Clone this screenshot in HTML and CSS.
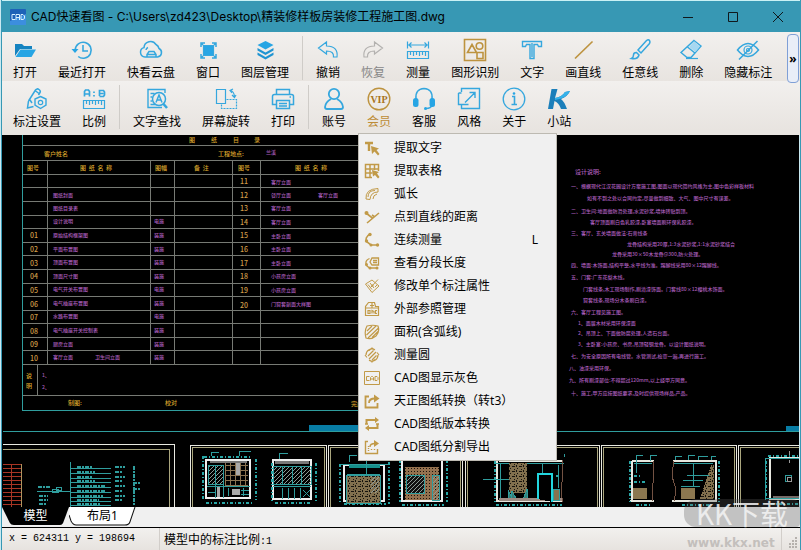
FILE: index.html
```html
<!DOCTYPE html>
<html lang="zh-CN">
<head>
<meta charset="utf-8">
<title>CAD快速看图</title>
<link rel="stylesheet" href="styles.css">
</head>
<body>
<div class="window">
  <header class="titlebar">
    <svg class="app-icon" viewBox="0 0 16 16" aria-hidden="true"><rect width="16" height="16" rx="1" fill="#1d62b8"/><path d="M0 12 16 5v11H0z" fill="#3c8ede"/><path d="M5 5.500H2v5h3M6 11V5.500h3.500V11M6 8.500h3.500M11 5.500h2l1.500 1.500v2.500L13 10.500h-2z" fill="none" stroke="#d7f0ff"/></svg>
    <h1 class="title">CAD快速看图 - C:\Users\zd423\Desktop\精装修样板房装修工程施工图.dwg</h1>
    <div class="controls">
      <button type="button" aria-label="最小化"><svg viewBox="0 0 12 12"><path d="M1 6.500h10"/></svg></button>
      <button type="button" aria-label="最大化"><svg viewBox="0 0 12 12"><path d="M1.500 1.500h9v9h-9z"/></svg></button>
      <button type="button" aria-label="关闭"><svg viewBox="0 0 12 12"><path d="M1 1l10 10M11 1 1 11"/></svg></button>
    </div>
  </header>

  <div class="toolbar">
    <div class="row">
      <div class="tools">
      <button type="button" class="tool"><svg viewBox="0 0 24 24"><path d="M2 18V6h7l2 2h8v3H7z" fill="#1583c0" stroke="none"/><path d="M7.500 11.500H23L18.500 19H2.500z" fill="#27a5e4" stroke="none"/></svg><span>打开</span></button>
      <button type="button" class="tool"><svg viewBox="0 0 24 24"><path d="M5.200 12a8 8 0 1 1 3 6.500M13 7v6h5" stroke-width="1.600"/><path d="M1.500 11h7L5 15z" fill="#27a5e4" stroke="none"/></svg><span>最近打开</span></button>
      <button type="button" class="tool"><svg viewBox="0 0 24 24"><path d="M7.500 19H6a4.800 4.800 0 0 1-1-9.400A6.500 6.500 0 0 1 17 6.500a6 6 0 0 1 3 4A4.500 4.500 0 0 1 18.500 19H17M8 19v-2.500l2-3h5l2 3V19zM8 16.500h9M7 12a3 3 0 0 1 2-2.500" stroke-width="1.500"/></svg><span>快看云盘</span></button>
      <button type="button" class="tool"><svg viewBox="0 0 24 24"><path d="M7.500 7.500h10v10h-10z" fill="#27a5e4"/><path d="M5 9V5h4M16 5h4v4M20 16v4h-4M9 20H5v-4M5 5l2 2M20 5l-2 2M5 20l2-2M20 20l-2-2" stroke-width="1.500"/></svg><span>窗口</span></button>
      <button type="button" class="tool"><svg viewBox="0 0 24 24"><path d="m12.500 3 8 4-8 4.500-8-4.500z" fill="#27a5e4" stroke="none"/><path d="m4.500 10 8 4.500 8-4.500v2.500l-8 4.500-8-4.500zM4.500 14.500l8 4.500 8-4.500V17l-8 4.500-8-4.500z" fill="#1f94d2" stroke="none"/></svg><span>图层管理</span></button>
      <i class="sep"></i>
      <button type="button" class="tool"><svg viewBox="0 0 24 24"><path d="m2.500 10 8-6v4c8 0 11.500 4 10.500 11h-3.500c.5-4-2-6-7-6v3z"/></svg><span>撤销</span></button>
      <button type="button" class="tool disabled" disabled><svg viewBox="0 0 24 24"><path d="m21.500 10-8-6v4C5.500 8 2 12 3 19h3.500c-.5-4 2-6 7-6v3z"/></svg><span>恢复</span></button>
      <button type="button" class="tool"><svg viewBox="0 0 24 24"><path d="M1.500 3.500v7M22.500 3.500v7M2 7h20M5.500 4.500 3 7l2.500 2.500M18.500 4.500 21 7l-2.500 2.500M1.500 13.500h21v7h-21zM4.500 14v3M7.500 14v4M10.500 14v3M13.500 14v4M16.500 14v3M19.500 14v4"/></svg><span>测量</span></button>
      <button type="button" class="tool gold-icon"><svg viewBox="0 0 24 24"><path d="M1.500 1.500h21v21h-21zM4.500 14.500l4.500-8 4.500 8zM14 14.500h6v6h-6z" stroke-width="1.600"/><circle cx="16.500" cy="8" r="3.300" stroke-width="1.600"/></svg><span>图形识别</span></button>
      <button type="button" class="tool"><svg viewBox="0 0 24 24"><path d="M2.500 3.500h19v5h-3l-1-2h-3.500v14h-4v-14H6.500l-1 2h-3zM12 5v14" stroke-width="1.400"/></svg><span>文字</span></button>
      <button type="button" class="tool gold-icon"><svg viewBox="0 0 24 24"><path d="M4 20.500 21.500 3.500" stroke-width="1.700"/></svg><span>画直线</span></button>
      <button type="button" class="tool"><svg viewBox="0 0 24 24"><path d="M10 12 18.500 2.500q2-1.500 3 0t0 3L13 15zM8.500 14.500l2.500 2.500q-1 4.500-7.500 3.500 2-1 2-3.500t3-2.500z" stroke-width="1.500"/></svg><span>任意线</span></button>
      <button type="button" class="tool"><svg viewBox="0 0 24 24"><path d="M15 2.500 22 8 12 19.500H8L2 14.500zM8.500 9l8 6.500" stroke-width="1.400"/><path d="m15 3.500 6 5-4.500 5.500-6.500-5z" fill="#a6d8f1" stroke="none"/><path d="M7 20.500h12"/></svg><span>删除</span></button>
      <button type="button" class="tool"><svg viewBox="0 0 24 24"><path d="M1.500 12q10.500-13 21 0-10.500 13-21 0zM21.500 3 3 21.500" stroke-width="1.500"/><circle cx="12" cy="12" r="4"/><circle cx="12" cy="12" r="1.500"/></svg><span>隐藏标注</span></button>
      </div>
      <button type="button" class="more" aria-label="更多工具">»</button>
    </div>
    <div class="row">
      <div class="tools">
      <button type="button" class="tool"><svg viewBox="0 0 24 24"><path d="m3.500 14 7-11q1.500-2 3.500-.500t1 3L13.500 8M3.500 14l-1 7 6-1.500M5 13l2 3M10 3.500l4 3" stroke-width="1.500"/><path d="M15.500 9.500 21 12v6l-5.500 3.500-5.500-3.500v-6z" stroke-width="1.400"/><circle cx="15.500" cy="15.500" r="2.200"/></svg><span>标注设置</span></button>
      <button type="button" class="tool"><svg viewBox="0 0 24 24"><path d="M2.500 9.500v-5l1-1.500h3l1 1.500v5M2.500 7h5M17.500 9V3.500h4L22.500 5v3l-1 1.500h-4M17.500 6.500h4M12 4.500v1.500M12 8v1.500" stroke-width="1.700"/><path d="M1.500 13.500h21v8h-21zM4.500 14v3M7.500 14v4M10.500 14v3M13.500 14v4M16.500 14v3M19.500 14v4"/></svg><span>比例</span></button>
      <i class="sep"></i>
      <button type="button" class="tool"><svg viewBox="0 0 24 24"><path d="M17 20.500H3v-18h17V6M5.500 6.500h4M5.500 10h1.500M5.500 14h1.500M5.500 17.500h5" stroke-width="1.400"/><circle cx="14" cy="12" r="6.500" stroke-width="1.500"/><path d="m18.500 17 3.500 4" stroke-width="2.500"/><path d="m11 15.500 3-7.500 3 7.500M12.200 13h3.600" stroke-width="1.500"/></svg><span>文字查找</span></button>
      <button type="button" class="tool"><svg viewBox="0 0 24 24"><path d="M2.500 2.500h9v14h-9zM16 3.500q4 .5 4.500 6M19 2l-3 1.500L18 6M18 8l2.500 2.500L22 8"/><path d="M12.500 12.500h10v9h-15V17" stroke-dasharray="2 1"/></svg><span>屏幕旋转</span></button>
      <button type="button" class="tool"><svg viewBox="0 0 24 24"><path d="M5.500 7.500v-5h13v5M5.500 17.500h-4v-8q0-2 2-2h17q2 0 2 2v8h-4M5.500 13.500h13v8h-13zM8 16.500h8M8 19h8M18.500 10h1.500" stroke-width="1.500"/></svg><span>打印</span></button>
      <i class="sep"></i>
      <button type="button" class="tool"><svg viewBox="0 0 24 24"><circle cx="12" cy="7" r="5.200" stroke-width="1.800"/><path d="M9 12q-5.500 3-6 8 0 2 2 2h14q2 0 2-2-.5-5-6-8" stroke-width="1.800"/></svg><span>账号</span></button>
      <div class="menu-anchor">
        <button type="button" class="tool gold-icon gold-label" aria-haspopup="menu" aria-expanded="true"><svg viewBox="0 0 24 24"><circle cx="12" cy="12" r="10.800" stroke-width="1.400"/><text x="12" y="15.500" class="vip">VIP</text></svg><span>会员</span></button>
        <div class="menu" role="menu">
          <button type="button" role="menuitem"><svg viewBox="0 0 16 16"><path d="M1 3h8M5 3v8" stroke-width="2.400"/><path d="m7 6 8 2.500-2.500 1.500 3 4-1.500 1.500-3.500-4L8 14z" class="fill"/></svg><span>提取文字</span></button>
          <button type="button" role="menuitem"><svg viewBox="0 0 16 16"><path d="M8 14.500H1.500v-13h13V8M1.500 6h13M1.500 10h7M6 1.500v13M10.500 1.500V7" stroke-width="1.500"/><path d="m8 7 7 2-2 1.500 2.500 3.500-1.500 1.500-3-3.500L9 13.500z" class="fill"/></svg><span>提取表格</span></button>
          <button type="button" role="menuitem"><svg viewBox="0 0 16 16"><path d="M2 13Q1 3 14 2.500V6Q6.500 6 6 13.500zM4 11Q4 4.500 11 4.500M9 13q0-4 4-5"/></svg><span>弧长</span></button>
          <button type="button" role="menuitem"><svg viewBox="0 0 16 16"><path d="M3 14 15 4M2 4l7 5.500M8 6l3 2" stroke-width="1.600"/><circle cx="2.500" cy="4" r="2" class="fill"/></svg><span>点到直线的距离</span></button>
          <button type="button" role="menuitem"><svg viewBox="0 0 16 16"><path d="M6 2q-6 4-3 8l4 3h7" stroke-width="1.600"/><circle cx="6" cy="2.500" r="1.700" class="fill"/><circle cx="2.500" cy="9" r="1.700" class="fill"/><circle cx="7" cy="13" r="1.500" class="fill"/><circle cx="13.500" cy="13" r="1.700" class="fill"/></svg><span>连续测量</span><kbd>L</kbd></button>
          <button type="button" role="menuitem"><svg viewBox="0 0 16 16"><path d="M5.500 3.500q-5 2-3 7l3 2.500h7M6 7l2-4h6.500v7H8zM9 5.500h4M9 7.500h4" stroke-width="1.300"/><circle cx="2.500" cy="9.500" r="1.500" class="fill"/><circle cx="6" cy="13" r="1.500" class="fill"/><circle cx="13" cy="13" r="1.500" class="fill"/></svg><span>查看分段长度</span></button>
          <button type="button" role="menuitem"><svg viewBox="0 0 16 16"><path d="m1.500 6 6.500-4 7 6-7 6.500zM4 6.500l4 5M6 5l4 5M7 9l7-7.500M11 9l2-2"/><path d="m7 9 1-3 2 2z" class="fill"/></svg><span>修改单个标注属性</span></button>
          <button type="button" role="menuitem"><svg viewBox="0 0 16 16"><path d="M1.500 14.500v-9l3-4h6l1 4h3v9zM1.500 7h13M6 4.500h4M8 2v5M4 9.500v3h2v-3zM8 12.500v-3l2 1v2M13 9.500h-1.500v3H13" stroke-width="1.200"/></svg><span>外部参照管理</span></button>
          <button type="button" role="menuitem"><svg viewBox="0 0 16 16"><path d="M3 2q6-1.500 11 0 2 6-2 10-5 4-10 2Q0 7 3 2zM3 7l5-5M2.500 11 12 2M4 14 14.500 4M8 13.500l6-6" stroke-width="1.200"/></svg><span>面积(含弧线)</span></button>
          <button type="button" role="menuitem"><svg viewBox="0 0 16 16"><path d="M2 8a6 6 0 0 1 9-5.200M14 8a6 6 0 0 1-9 5.200M1 8l2 2.500M15 8l-2-2.500M4 9l5.500-5.500M5 12l7-7M8 13l4.500-4.500M5 3.500 8 1l2.500 2M5.500 13 8 15l3-2.500" stroke-width="1.200"/></svg><span>测量圆</span></button>
          <button type="button" role="menuitem"><svg viewBox="0 0 16 16"><path d="M.5 1.500h15v13H.5zM5.500 6.500h-3v4h3M6.500 10.500v-3l1-1h1l1 1v3M6.500 9h3M11 6.500h2l1 1v2l-1 1h-2z"/></svg><span>CAD图显示灰色</span></button>
          <button type="button" role="menuitem"><svg viewBox="0 0 16 16"><path d="M5 3.500H1.500v11h12V10M5 10q0-4.500 6-4.500" stroke-width="1.800"/><path d="M10 1.500 15.500 5.500 10 9.500z" class="fill"/></svg><span>天正图纸转换（转t3）</span></button>
          <button type="button" role="menuitem"><svg viewBox="0 0 16 16"><path d="M2.500 8V4H12M13.500 8v4H4" stroke-width="2"/><path d="M11 1l4 3-4 3zM5 9l-4 3 4 3z" class="fill"/><path d="M1 8h3M12 8h3" stroke-width="1.500"/></svg><span>CAD图纸版本转换</span></button>
          <button type="button" role="menuitem"><svg viewBox="0 0 16 16"><path d="M4 2.500H1.500v12h12V10M6 8q0-3.500 5-3.500" stroke-width="1.400"/><path d="M10 1l5 3.500L10 8z" class="fill"/><path d="M4.500 7v5M7.500 10v2M10.500 10v2" stroke-dasharray="1 1" stroke-width="1.400"/></svg><span>CAD图纸分割导出</span></button>
        </div>
      </div>
      <button type="button" class="tool"><svg viewBox="0 0 24 24"><path d="M4 12q-1-10 8-10.500Q21 2 20 12M20 18q-1 3.500-6 3.500" stroke-width="1.500"/><rect x="1" y="11" width="5.500" height="9" rx="2.500" fill="#27a5e4" stroke="none"/><rect x="17.500" y="11" width="5.500" height="9" rx="2.500" fill="#27a5e4" stroke="none"/><circle cx="13.500" cy="21.500" r="1.500" fill="#27a5e4" stroke="none"/></svg><span>客服</span></button>
      <button type="button" class="tool"><svg viewBox="0 0 24 24"><path d="M12 1.500h10.500v20H4.500V18M12 1.500H4.500V5M1.500 6v11.500h10M1.500 6h3M8 15.500l10-10M18 11V5.500h-5.500" stroke-width="1.400"/></svg><span>风格</span></button>
      <button type="button" class="tool"><svg viewBox="0 0 24 24"><circle cx="12" cy="12" r="10.800" stroke-width="1.300"/><path d="M10 9.500h2.500v7.500M9.500 17.500h5.500" stroke-width="1.600"/><circle cx="12" cy="6.500" r="1.300" fill="#27a5e4" stroke="none"/></svg><span>关于</span></button>
      <button type="button" class="tool"><svg viewBox="0 0 24 24"><path d="M4.500 2h6L8 11q7-1 10-6l5-1q-2 5-9 8 3 2 6 10h-6q-2-6-6.500-8L6 22H1z" fill="#1c7fba" stroke="none"/><path d="M8 11q7-1 10-6l5-1q-3 7-15 9z" fill="#35b2ea" stroke="none"/></svg><span>小站</span></button>
      </div>
    </div>
  </div>

  <main class="canvas">
    <svg viewBox="2 135 798 372" preserveAspectRatio="xMinYMin slice" role="img" aria-label="图纸">
      <defs>
        <pattern id="hatch" width="4" height="4" patternUnits="userSpaceOnUse"><path d="M0 4 4 0" stroke="#8d9a95" fill="none"/></pattern>
        <pattern id="grid" width="5" height="5" patternUnits="userSpaceOnUse"><path d="M0 .5h5M.5 0v5" stroke="#8a7250" fill="none"/></pattern>
        <pattern id="stone" width="7" height="5" patternUnits="userSpaceOnUse"><rect width="7" height="5" fill="#82704e"/><path d="M1 1h2v1M5 0v2M3 4h1M6 3h1" stroke="#17140e" fill="none"/></pattern>
        <pattern id="dots" width="3" height="3" patternUnits="userSpaceOnUse"><rect width="3" height="3" fill="#94714f"/><rect width="1" height="1" fill="#1a130b"/></pattern>
      </defs>

      <!-- drawing index -->
      <g class="rule">
        <path d="M22 145.500H560M22 160.500H560M22 174.500H560M22 187.500H560M22 201.500H560M22 215.500H560M22 228.500H560M22 242.500H560M22 255.500H560M22 269.500H560M22 283.500H560M22 296.500H560M22 310.500H560M22 323.500H560M22 337.500H560M22 350.500H560M22 364.500H560M22 395.500H560" class="until-menu"/>
        <path d="M47.500 160v204M150.500 160v204M174.500 160v204M232.500 160v204M260.500 160v204M37.500 364v31"/>
      </g>
      <path class="cyan" d="M22.500 135v275.500H400M3 431.500H799"/>
      <path fill="#087da5" d="M309 425h90v6h-90zM786 426h13v5h-13z"/>
      <g class="gold">
        <text x="189" y="142">图</text><text x="211" y="142">纸</text><text x="233" y="142">目</text><text x="254" y="142">录</text>
        <text x="44" y="156">客户姓名</text><text x="218" y="156">工程地点:</text>
        <text x="27" y="170">图号</text><text x="80" y="170" xml:space="preserve">图  纸  名  称</text><text x="155" y="170">图幅</text><text x="194" y="170" xml:space="preserve">备  注</text><text x="238" y="170">图号</text><text x="295" y="170" xml:space="preserve">图  纸  名  称</text>
        <text x="26" y="378">说</text><text x="26" y="388">明</text><text x="68" y="405">制图:</text><text x="165" y="405">校对</text><text x="351" y="406">完成</text>
      </g>
      <g class="num">
        <text x="30" y="238">01</text><text x="30" y="252">02</text><text x="30" y="266">03</text><text x="30" y="279">04</text><text x="30" y="293">05</text><text x="30" y="307">06</text><text x="30" y="320">07</text><text x="30" y="334">08</text><text x="30" y="347">09</text><text x="30" y="361">10</text>
        <text x="240" y="184">11</text><text x="240" y="198">12</text><text x="240" y="211">13</text><text x="240" y="225">14</text><text x="240" y="238">15</text><text x="240" y="252">16</text><text x="240" y="266">17</text><text x="240" y="279">18</text><text x="240" y="293">19</text><text x="240" y="308">20</text>
      </g>
      <g class="purple">
        <text x="53" y="197">图纸封面</text><text x="53" y="210">图纸目录表</text><text x="53" y="223">设计说明</text><text x="53" y="237">原始结构框架图</text><text x="53" y="251">平面布置图</text><text x="53" y="264">顶面布置图</text><text x="53" y="278">顶面尺寸图</text><text x="53" y="291">电气开关布置图</text><text x="53" y="305">电气插座布置图</text><text x="53" y="318">水路布置图</text><text x="53" y="332">电气插座开关控制表</text><text x="53" y="346">厨房立面</text><text x="53" y="359">客厅立面</text><text x="95" y="359">卫生间立面</text>
        <text x="154" y="223">电施</text><text x="154" y="237">装施</text><text x="154" y="251">装施</text><text x="154" y="264">装施</text><text x="154" y="278">装施</text><text x="154" y="291">电施</text><text x="154" y="305">装施</text><text x="154" y="318">电施</text><text x="154" y="332">装施</text><text x="154" y="346">装施</text><text x="154" y="359">装施</text>
        <text x="266" y="154">兰溪</text><text x="271" y="184">客厅立面</text><text x="271" y="197">餐厅立面</text><text x="318" y="197">客厅立面</text><text x="271" y="210">客厅立面</text><text x="271" y="224">客厅立面</text><text x="271" y="238">主卧立面</text><text x="271" y="251">主卧立面</text><text x="271" y="265">主卧立面</text><text x="271" y="278">小孩房立面</text><text x="271" y="292">小孩房立面</text><text x="271" y="306">门窗套剖面大样图</text>
        <text x="42" y="377">1、</text><text x="42" y="389">2、</text>

        <!-- design notes -->
        <text x="575" y="174" class="heading">设计说明:</text>
        <text x="571" y="188">一、根据现代江汉花园设计方案施工图,图面以现代简约风格为主,图中色彩样板材料</text>
        <text x="587" y="200">如有不到之处以合同约定,尽量做到细致、大气、图中尺寸有误差。</text>
        <text x="571" y="213">二、卫生间:地面做防滑处理,水泥砂浆,墙体砖贴到顶。</text>
        <text x="590" y="224">客厅顶面刷白色乳胶漆,卧室墙面刷环保乳胶漆。</text>
        <text x="571" y="235">三、客厅、玄关墙面做法:石膏线条</text>
        <text x="627" y="246">龙骨结构采用20厚,1:3水泥砂浆,1:1水泥砂浆结合</text>
        <text x="612" y="256">龙骨采用30×50木龙骨@300,防火处理。</text>
        <text x="571" y="267">四、墙面:木饰面,结构平整,水平线为准。踢脚线采用80×12踢脚线。</text>
        <text x="571" y="279">五、门套:广东花梨木线。</text>
        <text x="583" y="291">门套线条,木工现场制作,刷清漆饰面。门套线80×12樱桃木饰面。</text>
        <text x="583" y="302">窗套线条,现场分木条刷白漆。</text>
        <text x="571" y="314">六、客厅工程见施工图。</text>
        <text x="578" y="325">1、面层木材采用环保漆面</text>
        <text x="578" y="335">2、吊顶上、下面做防腐处理,人造石台面。</text>
        <text x="578" y="346">3、主卧室:小孩房、书房,吊顶轻钢龙骨。以设计图纸说明。</text>
        <text x="571" y="358">七、为安全原因所有电线管。水管测试,检查一遍,再进行施工。</text>
        <text x="569" y="370">八、油漆采用环保。</text>
        <text x="569" y="382">九、所有刷漆部位:不得超过120mm,以上经甲方同意。</text>
        <text x="571" y="395">十、施工,甲方应按图纸要求,及时提供现场样品,产品。</text>
      </g>

      <!-- sheet borders -->
      <path class="white" d="M3 444.500H174.500V507M190.500 507V445.500H326.500V507M328.500 507V445.500H462.500V507M465.500 507V445.500H599.500V507M601.500 507V445.500H736.500V507M738.500 507V445.500H799"/>
      <path class="sheet" d="M3 449.500H169.500V507M192.500 507V447.500H324.500V507M330.500 507V447.500H460.500V507M467.500 507V447.500H597.500V507M603.500 507V447.500H734.500V507M740.500 507V447.500H799"/>

      <!-- wiring diagram -->
      <path d="M3 464.500h18M3 468.500h18M3 472.500h18M3 476.500h18M3 480.500h18M3 484.500h18M3 488.500h18M3 492.500h18M3 496.500h18M3 500.500h18M3 504.500h18M11.500 464v43" fill="none" stroke="#a83524"/>
      <path d="M21.500 464v43" stroke="#b09460"/>
      <path class="cyan" d="M70.500 462v45M70 468.500h41M70 473.500h41M70 478.500h41M70 482.500h41M70 487.500h41M70 492.500h41M70 497.500h41M70 501.500h41M70 505.500h41M37 491.500h33M52.500 489.500h6v3h-6zM56.500 487.500h5v3h-5z"/>
      <path class="cyan dash" stroke-width="2" d="M77 467h16M77 472h18M77 477h16M77 481h18M77 486h28M77 491h28M77 496h26M77 500h22M77 504h24M115 467h10M115 472h8M115 477h10M115 481h8M115 486h10M115 491h8M115 496h10M115 500h8M134 466v40M38 487h12M39 496h9M39 500h9M39 504h8M133 483h8M133 489h8"/>

      <!-- elevations -->
      <g>
        <path fill="#000" stroke="#eee" stroke-width="2" d="M206 460h44v38h-44z"/>
        <path d="M208 465h15v19h-15z" fill="url(#hatch)" class="cyan-line"/><path d="M225 463h23v23h-23z" fill="url(#grid)"/><path fill="#aaa" d="M236 463h4v12h-4zM232 489h8v6h-8zM217 487h3v10h-3z"/>
        <path fill="#777" d="M210 461h37v2h-37z"/><path class="cyan" d="M207 486.500h43M215.500 465v33M223.500 465v33M243.500 488v8M228.500 488v8M241 490.500h8M241 494.500h8M208 492.500h8M211 456v-4h8M239 456v-5h12"/>
        <path class="dim" d="M202.500 456v45M255.500 459v41M204 456.500h48M206 502.500h46"/>
      </g>
      <g>
        <path fill="#000" stroke="#eee" stroke-width="2" d="M273 460h38v39h-38z"/><path fill="#777" d="M275 461h34v3h-34z"/><path class="cyan-line" d="M273 466h38v18h-38z" fill="url(#hatch)"/>
        <path class="cyan" d="M273 486.500h38M282.500 466v18M292.500 466v18M301.500 466v18M282.500 488v11M288.500 488v11M294.500 488v11M300.500 488v11M303 490l7 7M310 490l-7 7M279.500 459v-6h8"/><path class="dim" d="M271.500 463v38M315.500 463v38M275 502.500h36"/>
      </g>
      <g>
        <path fill="#000" stroke="#eee" stroke-width="2" d="M344 465h40v36h-40z"/><path fill="#16908b" d="M349 465h31v3h-31z"/><path class="cyan-line" fill="url(#stone)" d="M346 475h34v28h-34z"/><path fill="url(#hatch)" d="M371 476h8v17h-8z"/><path class="cyan" d="M347 474.500h33M349.500 462v-7h7M366.500 475v-14M340 464.500h50"/><path class="dim" d="M339.500 464v38M388.500 462v42M344 503.500h42"/>
      </g>
      <g>
        <path fill="#000" stroke="#eee" stroke-width="2" d="M402 459h40v42h-40z"/><path fill="url(#dots)" d="M405 467h34v33h-34z"/><path fill="#111" d="M406 475h18v18h-18z"/><path fill="url(#hatch)" class="cyan-line" d="M406 475h18v18h-18zM432 475h7v25h-7z"/><path class="dim" d="M399.500 460v42M446.500 460v42M402 504.500h42"/>
      </g>
      <g>
        <path class="white" stroke-width="2" d="M497 459v43M496 501h67M499 461h64"/><path class="cyan" d="M496 463.500h68M500.500 463v36M483 479.500h26M558.500 465v23M564.500 457v-3M542 463v10"/><path fill="url(#stone)" d="M509 463h18v30h-18z"/><path class="cyan-line" fill="#397c76" d="M508 490l5 10h-4zM527 489l-4 11h5zM512 491l5 9h-6z"/><path fill="#9d8b83" d="M499 498h63v3h-63z"/><path d="M538 499v-25h14v28" fill="#000" stroke="#22d6df" stroke-width="2"/><path class="cyan-line" fill="#87734f" d="M553 489h6v11h-6z"/><path fill="none" stroke="#735243" d="M562 460q2 12 0 22t1 20"/><path class="dim" d="M494.500 461v41M496 504.500h66M556 475.500h4"/>
      </g>
      <g>
        <path class="white" stroke-width="2" d="M632 461v39M630 501h24M632 461h22"/><path class="cyan" d="M634 463.500h18M636.500 473v-18h6M650.500 461v-6h6"/><path fill="#8b7750" d="M633 488h14v11h-14z"/><path fill="none" stroke="#735243" d="M653 461q2 15 0 22t0 18"/><path class="dim" d="M629.500 461v41M634 475.500h8M634 481.500h11M636 504.500h16"/>
      </g>
      <g>
        <path class="white" stroke-width="2" d="M673 461h43v40h-44"/><path fill="url(#stone)" d="M711 465h3v34h-14z"/><path fill="#8b7750" d="M681 488h14v11h-14z"/><path class="cyan" d="M673 463.500h40M687 475.500h22M683 480.500h20M681 486.500h19M693.500 464v22M675 460v-4h7M688 460v-5h7M698 460v-4h10M711 460v-4h5"/><path fill="none" stroke="#735243" d="M674 461q-3 15 0 22t0 18"/><path class="dim" d="M718.500 461v41M682 504.500h28"/>
      </g>
      <g>
        <path class="white" stroke-width="2" d="M799 458h-29v41h29"/><path class="cyan" d="M765 458.500h34M765.500 458v42M767 498.500h32M785.500 475.500h6v6h-6z"/><path fill="#776b68" d="M773 496h26v2h-26z"/><path stroke="#9a9a9a" fill="none" d="M787 477h4v4h-4zM789 451v6M789 460v3"/><path class="dim" d="M765.500 461v40M768 455.500h31M771 503.500h28"/>
      </g>
    </svg>
  </main>

  <nav class="tabs">
    <button type="button" class="tab active"><svg viewBox="0 0 68 19" preserveAspectRatio="none"><path d="M0 0h68l-6 16q-1 2-3 2H12q-3 0-4-2z" fill="#000"/></svg><span>模型</span></button>
    <button type="button" class="tab"><svg viewBox="0 0 66 19" preserveAspectRatio="none"><path d="M1 0h64l-5 15q-1 3-5 3H7q-3 0-5-4L0 8z" fill="#fff"/><path d="M65 0l-5 15q-1 3-5 3H7q-3 0-5-4L0 8" fill="none" stroke="#111"/></svg><span>布局1</span></button>
  </nav>

  <footer class="status">
    <output class="coords">x = 624311 y = 198694</output>
    <span class="scale">模型中的标注比例<b>:1</b></span>
    <svg class="grip" viewBox="0 0 12 12" aria-hidden="true"><path d="M8 1h2M5 4h2M8 4h2M2 7h2M5 7h2M8 7h2M2 10h2M5 10h2M8 10h2" stroke="#b5b1ad" stroke-width="2"/></svg>
  </footer>

  <div class="watermark">
    <strong>KK下载</strong>
    <span>www.kkx.net</span>
  </div>
</div>
</body>
</html>
```
FILE: styles.css
```css
* { box-sizing: border-box; }

body {
  margin: 0;
  background: #c9e9f1;
  color: #000;
  font: 12px/16px "Noto Sans", "Noto Sans CJK SC", sans-serif;
}

button {
  margin: 0;
  padding: 0;
  border: 0;
  background: none;
  color: inherit;
  font: inherit;
}

svg { display: block; }

.window {
  position: relative;
  display: flex;
  flex-direction: column;
  height: 100vh;
  margin-left: 1px;
  border: solid #3798b4;
  border-width: 0 1px;
  overflow: hidden;
}

/* title bar */
.titlebar {
  display: flex;
  align-items: center;
  flex: none;
  height: 32px;
  padding-left: 8px;
  border-top: 1px solid #c9f1f5;
  background: #3798b4;
}

.app-icon { width: 16px; height: 16px; }

.title {
  flex: 1;
  margin: 0 0 0 5px;
  font: 400 12px/18px Inter, "Noto Sans CJK SC", sans-serif;
  white-space: nowrap;
  overflow: hidden;
}

.controls { display: flex; height: 100%; }

.controls button {
  display: grid;
  place-items: center;
  width: 45px;
}

.controls svg {
  width: 12px;
  height: 12px;
  fill: none;
  stroke: #10181c;
}

/* toolbar */
.toolbar {
  flex: none;
  height: 103px;
  background: #e9e6e2;
}

.row {
  display: flex;
  justify-content: space-between;
  height: 49px;
  padding: 0 1px 0 11px;
  background: linear-gradient(#f2f0ee, #e8e4e0);
}

.tools {
  display: flex;
  gap: 21px;
}

.tool {
  display: flex;
  flex-direction: column;
  align-items: center;
  flex: none;
  gap: 2px;
  padding-top: 6px;
  font-family: "Noto Sans CJK SC", sans-serif;
  white-space: nowrap;
}

.tool svg {
  width: 24px;
  height: 24px;
  fill: none;
  stroke: #35a7de;
  stroke-width: 1.2;
}

.disabled { color: #888; }
.disabled svg { stroke: #b3b1af; }
.gold-icon svg { stroke: #bd933f; }
.gold-label { color: #bd8c37; }

.vip {
  fill: #a8741c;
  stroke: none;
  font: bold 10px "Liberation Serif", serif;
  text-anchor: middle;
}

.sep {
  flex: none;
  width: 1px;
  height: 44px;
  margin: 4px -8px 0;
  background: #cfccc8;
}

.more {
  flex: none;
  width: 12px;
  height: 49px;
  margin-top: 2px;
  border: 1px solid #7f9fd6;
  border-radius: 4px;
  background: #e9eef8;
  font-weight: 700;
}

/* drop-down menu */
.menu-anchor { position: relative; }

.menu {
  position: absolute;
  z-index: 2;
  top: 52px;
  left: -9px;
  width: 199px;
  padding: 2px 0;
  border: 1px solid #bdbab2;
  background: #f0f0f0;
}

.menu button {
  display: flex;
  align-items: center;
  gap: 14px;
  width: 100%;
  height: 23px;
  padding: 0 18px 0 5px;
  text-align: left;
  white-space: nowrap;
}

.menu svg {
  flex: none;
  width: 16px;
  height: 16px;
  fill: none;
  stroke: #c19a48;
}

.menu .fill { fill: #c19a48; stroke: none; }

.menu kbd {
  margin-left: auto;
  font: inherit;
}

/* drawing area */
.canvas {
  flex: 1;
  min-height: 0;
  margin-right: 1px;
  background: #000;
}

.canvas svg {
  width: 100%;
  height: 100%;
  shape-rendering: crispEdges;
}

.canvas text { font-family: "Noto Sans CJK SC", sans-serif; font-size: 5px; font-weight: 500; }
.canvas .rule { fill: none; stroke: #777a74; }
.canvas .until-menu { stroke-dasharray: 336 300; }
.canvas .cyan { fill: none; stroke: #2f9d9d; }
.canvas .cyan-line { stroke: #2f9d9d; }
.canvas .white { fill: none; stroke: #e8e8e0; }
.canvas .sheet { fill: none; stroke: #aaa67e; }
.canvas .dash { stroke-dasharray: 4 1 2 1; }
.canvas .dim { fill: none; stroke: #28a6a6; stroke-width: 2; stroke-dasharray: 3 2 1 2; }
.canvas .gold { fill: #d9a52c; }
.canvas .gold text { font-size: 6px; }
.canvas .num { fill: #cf9c48; }
.canvas .num text { font-size: 7px; }
.canvas .purple { fill: #a95dba; }
.canvas .purple .heading { font-size: 6px; }

/* layout tabs */
.tabs {
  display: flex;
  flex: none;
  height: 21px;
  border-bottom: 1px solid #000;
  background: #f0f0f0;
}

.tab {
  display: grid;
  width: 67px;
  height: 19px;
}

.tab > * { grid-area: 1 / 1; }

.tab svg { width: 100%; height: 19px; }

.tab span {
  z-index: 1;
  line-height: 18px;
  text-align: center;
}

.active { color: #fff; }

/* status bar */
.status {
  display: flex;
  align-items: center;
  flex: none;
  height: 22px;
  background: linear-gradient(#f2f0ee, #e7e3df);
  font-family: "Noto Sans CJK SC", sans-serif;
}

.coords {
  width: 157px;
  padding-left: 7px;
  font: 10px/22px "Liberation Mono", monospace;
}

.scale {
  flex: 1;
  padding-left: 4px;
  border-left: 1px solid #d2ceca;
  line-height: 22px;
}

.scale b { font: 10px "Liberation Mono", monospace; }

.grip {
  align-self: stretch;
  width: 19px;
  height: 22px;
  padding: 8px 1px 0 5px;
  border-left: 1px solid #d2ceca;
}

/* site mark over the lower right corner */
.watermark {
  position: absolute;
  right: 0;
  bottom: 0;
  width: 116px;
  color: #c3bfbc;
  pointer-events: none;
}

.watermark strong {
  display: block;
  border-radius: 12px 8px 4px 12px;
  background: rgb(90 90 90 / 30%);
  color: rgb(244 244 244 / 85%);
  font: 400 28px/28px "Noto Sans CJK SC", sans-serif;
  text-align: center;
  white-space: nowrap;
}

.watermark span {
  display: block;
  padding: 9px 0 0 3px;
  font: bold 12px/14px "DejaVu Sans", sans-serif;
}
```
